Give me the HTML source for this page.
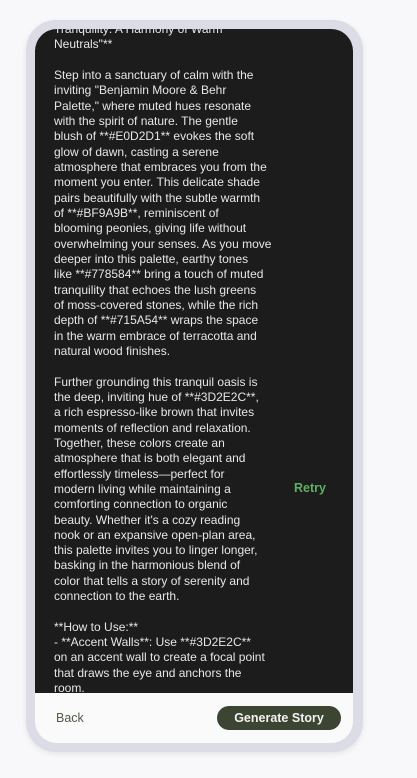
<!DOCTYPE html>
<html><head><meta charset="utf-8"><style>
html,body{margin:0;padding:0;background:#f8f8fa;width:417px;height:778px;overflow:hidden;font-family:"Liberation Sans",sans-serif}
.frame{position:absolute;left:26px;top:20px;width:337px;height:732px;background:#dcdce6;border-radius:30px;box-shadow:0 2px 6px rgba(0,0,0,0.08)}
.screen{position:absolute;left:35px;top:29px;width:318px;height:714px;border-radius:22px;overflow:hidden;background:#fafafa}
.dark{position:absolute;left:0;top:0;width:318px;height:664px;background:#1c1c1c;overflow:hidden}
.txt{position:absolute;left:19px;top:-7px;color:#e6e6e6;font-size:12px;line-height:15.33px;white-space:nowrap}
.retry{position:absolute;left:259px;top:452px;color:#5fae62;font-size:12.5px;font-weight:bold}
.back{position:absolute;left:21px;top:682px;color:#505a48;font-size:12.5px}
.btn{position:absolute;left:182px;top:677px;width:124px;height:24px;border-radius:12px;background:#3c4531;color:#f2f2f2;font-size:12.5px;font-weight:bold;text-align:center;line-height:24px}
</style></head><body>
<div class="frame"></div>
<div class="screen">
<div class="dark">
<div class="txt">Tranquility: A Harmony of Warm<br>Neutrals"**<br><br>Step into a sanctuary of calm with the<br>inviting "Benjamin Moore &amp; Behr<br>Palette," where muted hues resonate<br>with the spirit of nature. The gentle<br>blush of **#E0D2D1** evokes the soft<br>glow of dawn, casting a serene<br>atmosphere that embraces you from the<br>moment you enter. This delicate shade<br>pairs beautifully with the subtle warmth<br>of **#BF9A9B**, reminiscent of<br>blooming peonies, giving life without<br>overwhelming your senses. As you move<br>deeper into this palette, earthy tones<br>like **#778584** bring a touch of muted<br>tranquility that echoes the lush greens<br>of moss-covered stones, while the rich<br>depth of **#715A54** wraps the space<br>in the warm embrace of terracotta and<br>natural wood finishes.<br><br>Further grounding this tranquil oasis is<br>the deep, inviting hue of **#3D2E2C**,<br>a rich espresso-like brown that invites<br>moments of reflection and relaxation.<br>Together, these colors create an<br>atmosphere that is both elegant and<br>effortlessly timeless—perfect for<br>modern living while maintaining a<br>comforting connection to organic<br>beauty. Whether it's a cozy reading<br>nook or an expansive open-plan area,<br>this palette invites you to linger longer,<br>basking in the harmonious blend of<br>color that tells a story of serenity and<br>connection to the earth.<br><br>**How to Use:**<br>- **Accent Walls**: Use **#3D2E2C**<br>on an accent wall to create a focal point<br>that draws the eye and anchors the<br>room.</div>
<div class="retry">Retry</div>
</div>
<div class="back">Back</div>
<div class="btn">Generate Story</div>
</div>
</body></html>
